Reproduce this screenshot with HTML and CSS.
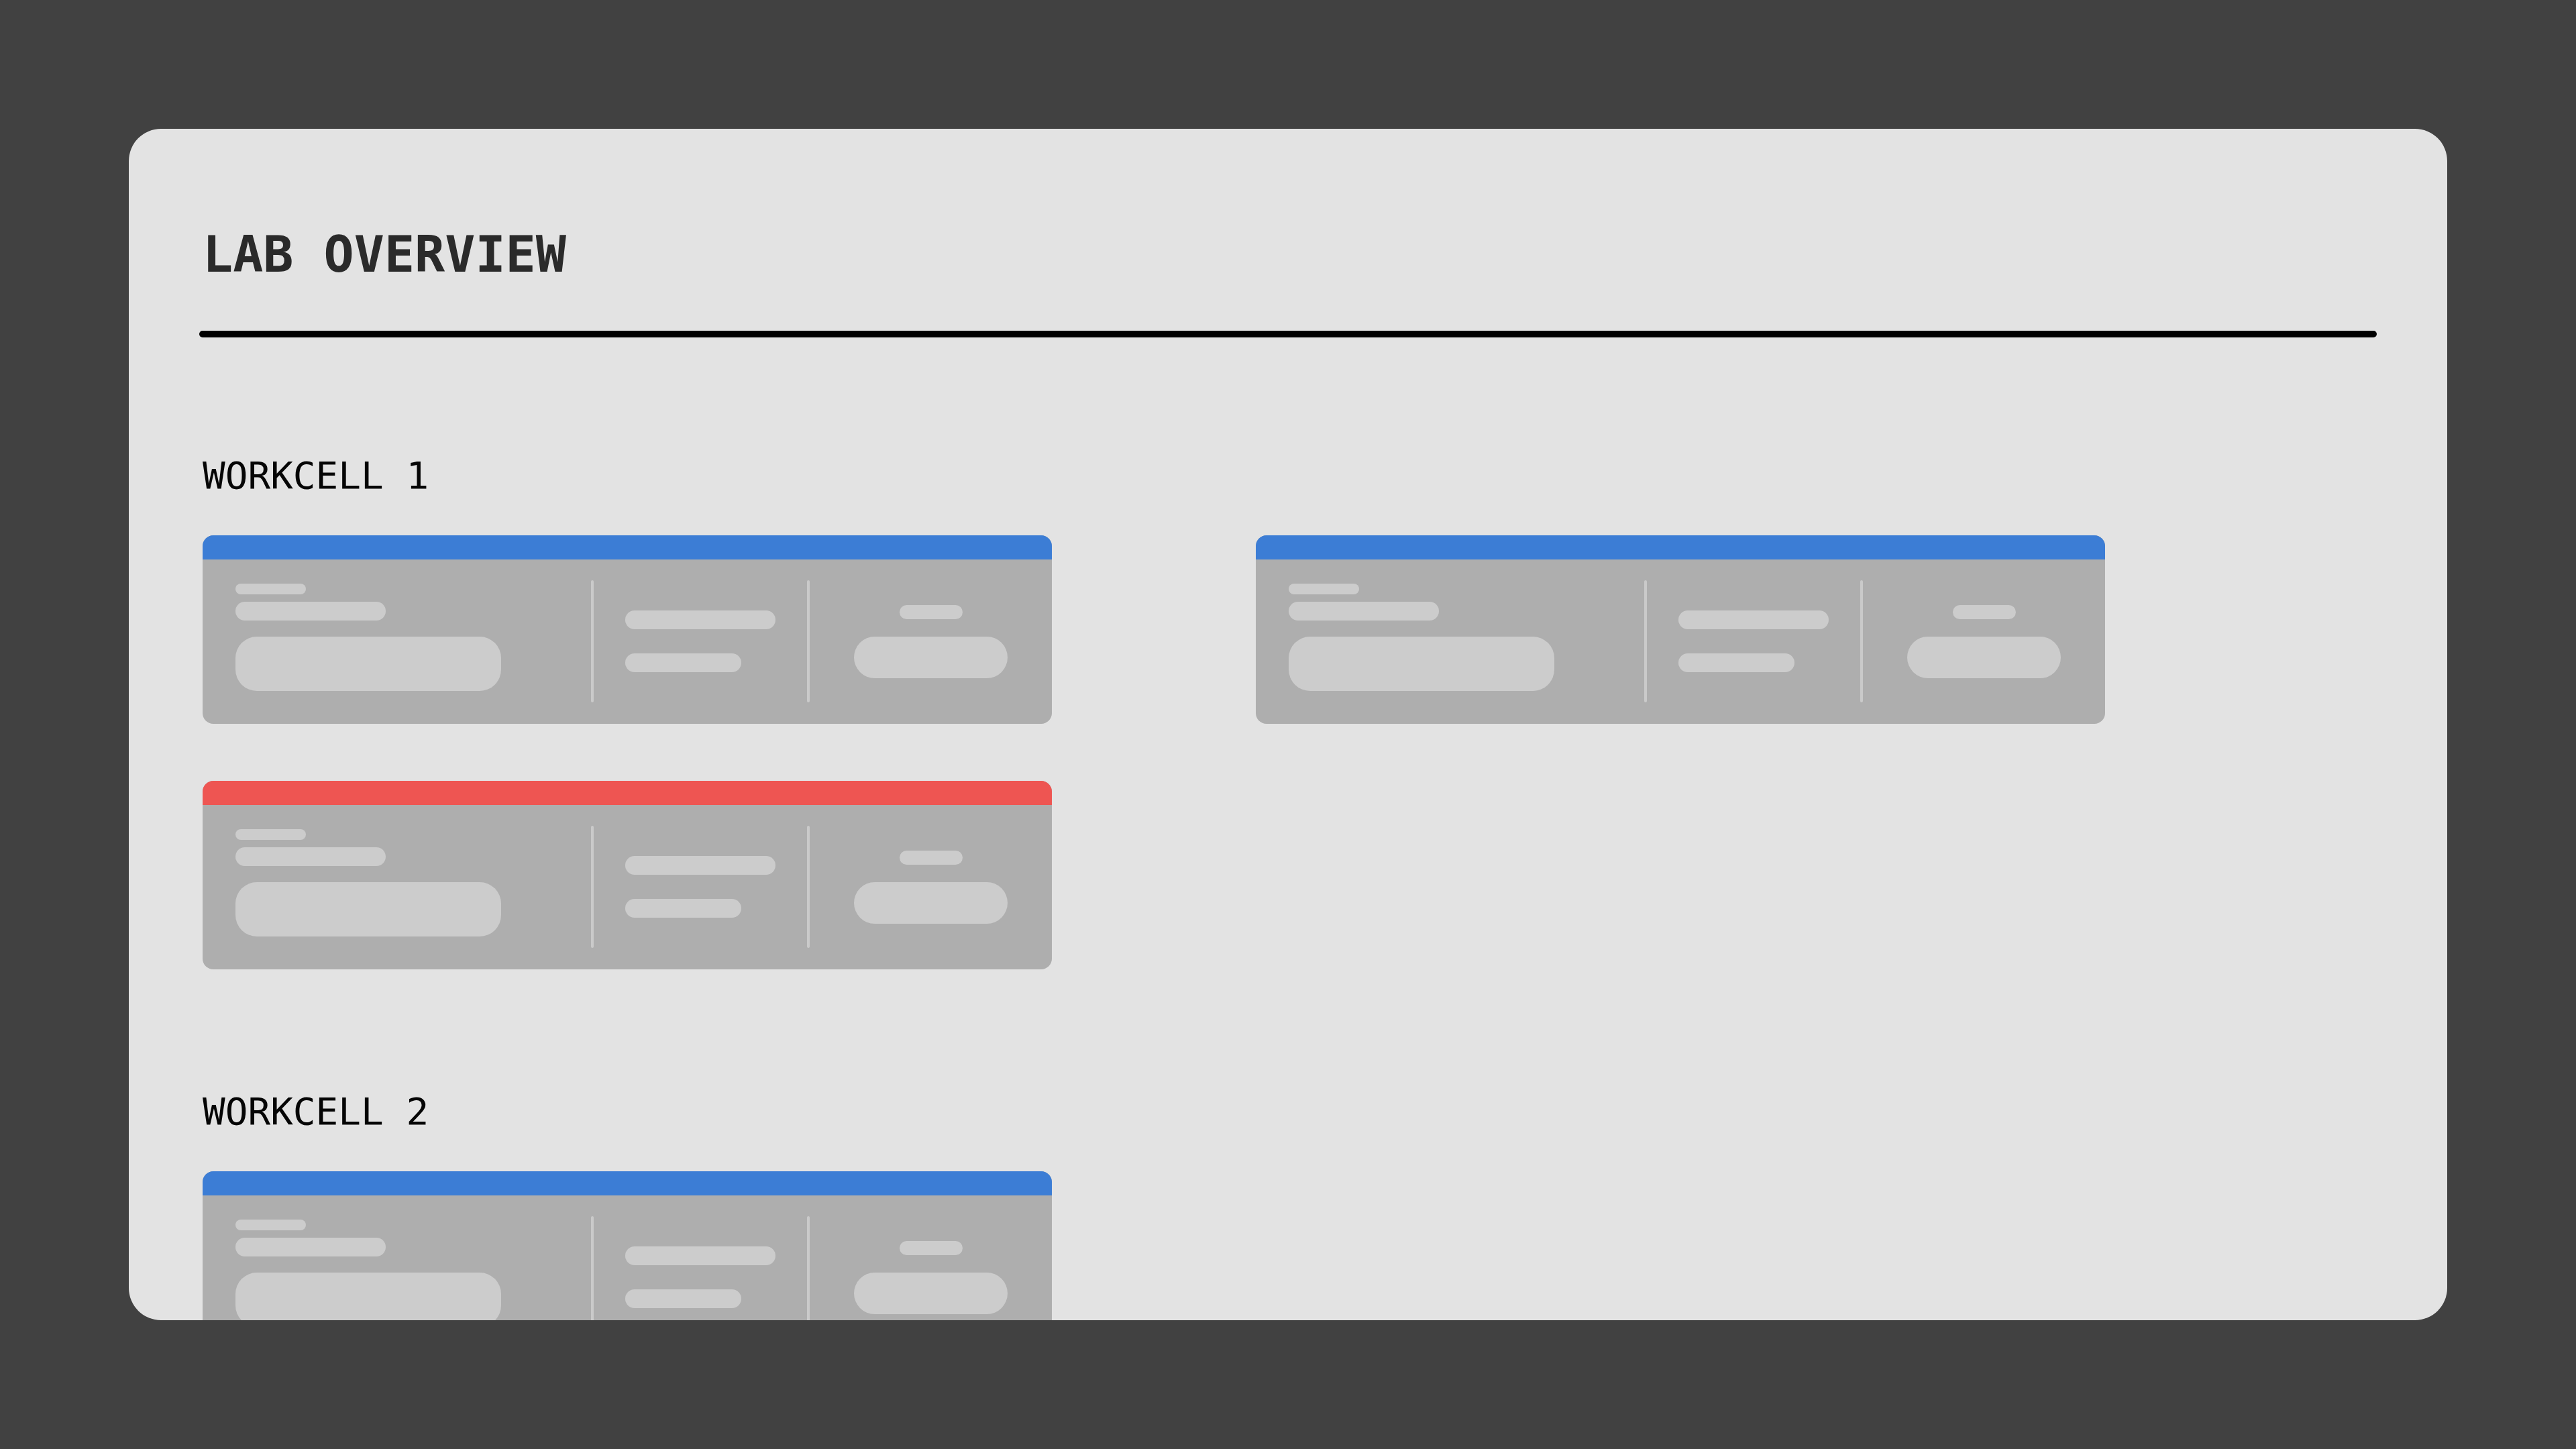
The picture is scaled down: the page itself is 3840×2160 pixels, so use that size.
FILE: index.html
```html
<!DOCTYPE html>
<html lang="en">
<head>
    <meta charset="UTF-8">
    <meta name="viewport" content="width=device-width, initial-scale=1.0">
    <title>Lab Overview</title>
    <link rel="stylesheet" href="styles.css">
</head>
<body>
    <div class="panel">
        <h1 class="title">LAB OVERVIEW</h1>
        <div class="rule"></div>

        <section class="workcell">
            <h2 class="workcell-name">WORKCELL 1</h2>
            <div class="cards">
                <div class="card ok">
                    <div class="card-head"></div>
                    <div class="card-body">
                        <div class="col col-info">
                            <div class="bar bar-label"></div>
                            <div class="bar bar-name"></div>
                            <div class="bar bar-block"></div>
                        </div>
                        <div class="divider"></div>
                        <div class="col col-stats">
                            <div class="bar bar-stat"></div>
                            <div class="bar bar-stat short"></div>
                        </div>
                        <div class="divider"></div>
                        <div class="col col-state">
                            <div class="bar bar-tag"></div>
                            <div class="bar bar-button"></div>
                        </div>
                    </div>
                </div>

                <div class="card ok">
                    <div class="card-head"></div>
                    <div class="card-body">
                        <div class="col col-info">
                            <div class="bar bar-label"></div>
                            <div class="bar bar-name"></div>
                            <div class="bar bar-block"></div>
                        </div>
                        <div class="divider"></div>
                        <div class="col col-stats">
                            <div class="bar bar-stat"></div>
                            <div class="bar bar-stat short"></div>
                        </div>
                        <div class="divider"></div>
                        <div class="col col-state">
                            <div class="bar bar-tag"></div>
                            <div class="bar bar-button"></div>
                        </div>
                    </div>
                </div>

                <div class="card error">
                    <div class="card-head"></div>
                    <div class="card-body">
                        <div class="col col-info">
                            <div class="bar bar-label"></div>
                            <div class="bar bar-name"></div>
                            <div class="bar bar-block"></div>
                        </div>
                        <div class="divider"></div>
                        <div class="col col-stats">
                            <div class="bar bar-stat"></div>
                            <div class="bar bar-stat short"></div>
                        </div>
                        <div class="divider"></div>
                        <div class="col col-state">
                            <div class="bar bar-tag"></div>
                            <div class="bar bar-button"></div>
                        </div>
                    </div>
                </div>
            </div>
        </section>

        <section class="workcell">
            <h2 class="workcell-name">WORKCELL 2</h2>
            <div class="cards">
                <div class="card ok">
                    <div class="card-head"></div>
                    <div class="card-body">
                        <div class="col col-info">
                            <div class="bar bar-label"></div>
                            <div class="bar bar-name"></div>
                            <div class="bar bar-block"></div>
                        </div>
                        <div class="divider"></div>
                        <div class="col col-stats">
                            <div class="bar bar-stat"></div>
                            <div class="bar bar-stat short"></div>
                        </div>
                        <div class="divider"></div>
                        <div class="col col-state">
                            <div class="bar bar-tag"></div>
                            <div class="bar bar-button"></div>
                        </div>
                    </div>
                </div>
            </div>
        </section>
    </div>
</body>
</html>
```

FILE: styles.css
```css
body {
    margin: 0;
    padding: 192px;
    background-color: #414141;
    font-family: "DejaVu Sans Mono", "Liberation Mono", monospace;
}

.panel {
    height: 1776px;
    box-sizing: border-box;
    padding: 150px 110px 0;
    background: #e3e3e3;
    border-radius: 48px;
    overflow: hidden;
}

.title {
    margin: 0;
    font-size: 75px;
    line-height: 75px;
    font-weight: 700;
    color: #2a2a2a;
}

.rule {
    height: 10px;
    margin: 76px -5px 0;
    background: #000;
    border-radius: 5px;
}

.workcell {
    margin-top: 178px;
}

.workcell + .workcell {
    margin-top: 184px;
}

.workcell-name {
    margin: 0 0 61px;
    font-size: 56px;
    line-height: 56px;
    font-weight: 400;
    color: #050505;
}

.cards {
    display: grid;
    grid-template-columns: repeat(2, 1266px);
    column-gap: 304px;
    row-gap: 85px;
}

.card {
    background: #aeaeae;
    border-radius: 16px;
    overflow: hidden;
}

.card-head {
    height: 36px;
}

.ok .card-head {
    background: #3c7dd5;
}

.error .card-head {
    background: #ee5552;
}

.card-body {
    display: grid;
    grid-template-columns: 530px 4px 318px 4px 1fr;
    padding: 31px 0 32px 49px;
    height: 245px;
    box-sizing: border-box;
}

.divider {
    background: #cacaca;
    border-radius: 2px;
}

.col {
    display: flex;
    flex-direction: column;
}

.col-info {
    align-self: start;
    margin-top: 5px;
}

.col-stats {
    align-self: center;
    padding-left: 47px;
    gap: 36px;
}

.col-state {
    align-self: center;
    align-items: center;
    gap: 26px;
}

.bar {
    background: #cccccc;
    border-radius: 999px;
}

.bar-label {
    width: 105px;
    height: 16px;
}

.bar-name {
    width: 224px;
    height: 28px;
    margin-top: 11px;
}

.bar-block {
    width: 396px;
    height: 81px;
    margin-top: 24px;
    border-radius: 32px;
}

.bar-stat {
    width: 224px;
    height: 28px;
}

.bar-stat.short {
    width: 173px;
}

.bar-tag {
    width: 94px;
    height: 21px;
}

.bar-button {
    width: 229px;
    height: 62px;
}
```
